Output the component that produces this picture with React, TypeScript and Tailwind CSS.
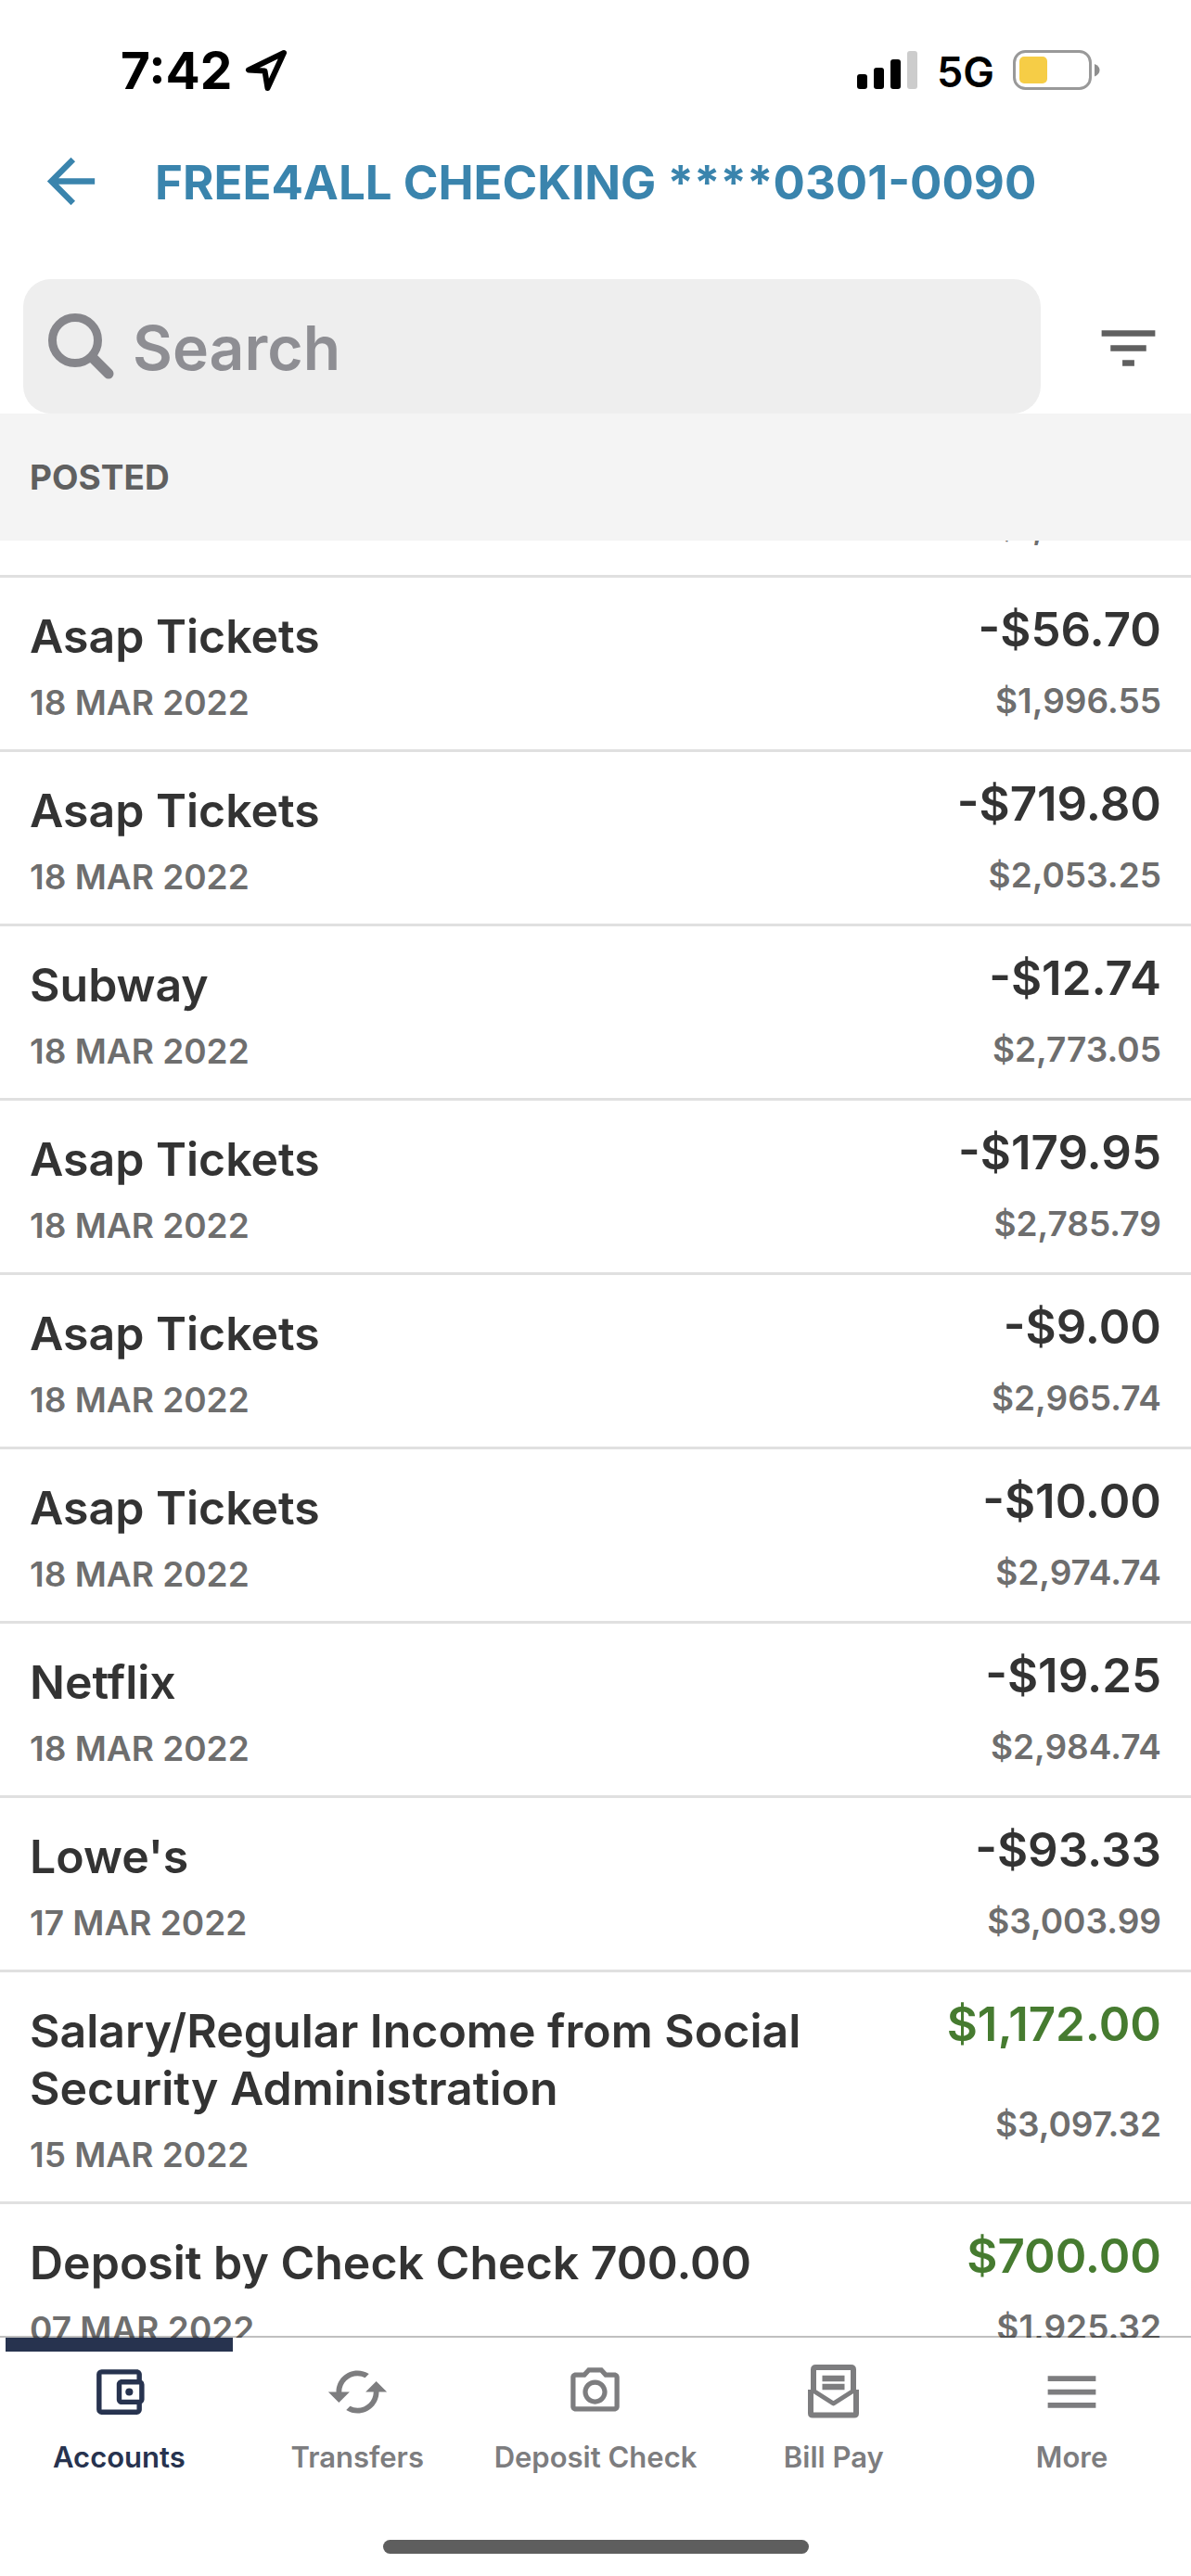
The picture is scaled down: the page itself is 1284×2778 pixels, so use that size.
import React from 'react';
import {
  MdArrowBack,
  MdCached,
  MdFilterList,
  MdMenu,
  MdOutlineAccountBalanceWallet,
  MdOutlinePhotoCamera,
} from 'react-icons/md';

interface Transaction {
  id: number;
  name: string;
  date: string;
  amount: string;
  balance: string;
}

const transactions: Transaction[] = [
  { id: 1, name: 'Asap Tickets', date: '20 MAR 2022', amount: '-$56.70', balance: '$1,939.85' },
  { id: 2, name: 'Asap Tickets', date: '18 MAR 2022', amount: '-$56.70', balance: '$1,996.55' },
  { id: 3, name: 'Asap Tickets', date: '18 MAR 2022', amount: '-$719.80', balance: '$2,053.25' },
  { id: 4, name: 'Subway', date: '18 MAR 2022', amount: '-$12.74', balance: '$2,773.05' },
  { id: 5, name: 'Asap Tickets', date: '18 MAR 2022', amount: '-$179.95', balance: '$2,785.79' },
  { id: 6, name: 'Asap Tickets', date: '18 MAR 2022', amount: '-$9.00', balance: '$2,965.74' },
  { id: 7, name: 'Asap Tickets', date: '18 MAR 2022', amount: '-$10.00', balance: '$2,974.74' },
  { id: 8, name: 'Netflix', date: '18 MAR 2022', amount: '-$19.25', balance: '$2,984.74' },
  { id: 9, name: "Lowe's", date: '17 MAR 2022', amount: '-$93.33', balance: '$3,003.99' },
  {
    id: 10,
    name: 'Salary/Regular Income from Social Security Administration',
    date: '15 MAR 2022',
    amount: '$1,172.00',
    balance: '$3,097.32',
  },
  { id: 11, name: 'Deposit by Check Check 700.00', date: '07 MAR 2022', amount: '$700.00', balance: '$1,925.32' },
];

const BillPayIcon = () => (
  <svg width="56" height="58" viewBox="0 0 56 58" fill="none" stroke="currentColor" strokeLinejoin="round">
    <path d="M6 29V5.500Q6 3 8.500 3H46.500Q49 3 49 5.500V29" strokeWidth="6" />
    <path d="M3 27V52.500Q3 54.500 5 54.500H50Q52 54.500 52 52.500V27" strokeWidth="6" />
    <path d="M4 27 27.500 42 51 27" strokeWidth="5" />
    <path d="M15.500 15H39.500M15.500 24H39.500" strokeWidth="6.500" />
  </svg>
);

const tabs = [
  { label: 'Accounts', icon: <MdOutlineAccountBalanceWallet size={65} />, active: true },
  { label: 'Transfers', icon: <MdCached size={69} /> },
  { label: 'Deposit Check', icon: <MdOutlinePhotoCamera size={63} /> },
  { label: 'Bill Pay', icon: <BillPayIcon /> },
  { label: 'More', icon: <MdMenu size={69} /> },
];

function StatusBar() {
  return (
    <div className="flex items-center justify-between pt-12 pr-[98px] pl-[130px] text-black">
      <div className="flex h-14 items-center gap-[14px]">
        <span className="text-[55px] leading-14 font-bold">7:42</span>
        <svg width="46" height="46" viewBox="0 0 46 46" fill="none">
          <path
            d="M42 4 4 22.500 21.500 23.500 24.500 42Z"
            stroke="currentColor"
            strokeWidth="6"
            strokeLinejoin="round"
          />
        </svg>
      </div>
      <div className="flex h-14 items-center gap-5">
        <svg width="66" height="42" viewBox="0 0 66 42" fill="currentColor">
          <rect x="0" y="25" width="11" height="16" rx="3" />
          <rect x="18" y="18" width="11" height="23" rx="3" />
          <rect x="36" y="9" width="11" height="32" rx="3" />
          <rect x="54" y="0" width="11" height="41" rx="3" fill="#cccccc" />
        </svg>
        <span className="pt-1 text-[45px] leading-14 font-semibold">5G</span>
        <svg width="94" height="44" viewBox="0 0 94 44">
          <rect x="1.500" y="1.500" width="82" height="40" rx="12" fill="none" stroke="#999999" strokeWidth="3" />
          <rect x="7" y="7" width="30" height="29" rx="5" fill="#f6cd46" />
          <path d="M88 15Q93.500 17 93.500 21.500T88 28.500Z" fill="#8e8e8e" />
        </svg>
      </div>
    </div>
  );
}

function TransactionRow({ item }: { item: Transaction }) {
  const isCredit = !item.amount.startsWith('-');
  return (
    <li className="flex justify-between border-b-[3px] border-[#e0e0e0] px-8 pt-8 pb-[25px]">
      <div className="max-w-[900px]">
        <h2 className="text-[50px] leading-[62px] font-semibold text-[#333333]">{item.name}</h2>
        <p className="mt-4 text-[37px] leading-[50px] font-semibold text-[#6e6e6e]">{item.date}</p>
      </div>
      <div className="flex flex-col text-right">
        <p
          className={`h-[50px] overflow-hidden text-[51px] leading-[48px] font-semibold ${isCredit ? 'text-[#467b30]' : 'text-[#333333]'}`}
        >
          {item.amount}
        </p>
        <div className="flex flex-1 items-center justify-end pt-[23px]">
          <p className="text-[37px] leading-[50px] font-semibold text-[#6e6e6e]">{item.balance}</p>
        </div>
      </div>
    </li>
  );
}

export default function App() {
  return (
    <div className="flex h-screen flex-col bg-white font-['Inter',sans-serif]">
      <StatusBar />

      <header className="flex items-center gap-[52px] px-[38px] pt-[46px] pb-[61px] text-[#3a84ad]">
        <button type="button" aria-label="Back">
          <MdArrowBack size={77} />
        </button>
        <h1 className="pt-1 text-[51px] leading-[86px] font-bold whitespace-nowrap">
          FREE4ALL CHECKING ****0301-0090
        </h1>
      </header>

      <div className="flex items-center pr-[29px] pl-[25px]">
        <label className="flex h-[145px] min-w-0 flex-1 items-center gap-5 rounded-[30px] bg-[#eeeeee] px-[27px]">
          <svg width="71" height="71" viewBox="0 0 71 71" fill="none" stroke="#86868b" className="shrink-0">
            <circle cx="29" cy="29" r="24.500" strokeWidth="9" />
            <path d="M48 48 65 65" strokeWidth="11" strokeLinecap="round" />
          </svg>
          <input
            type="search"
            aria-label="Search"
            placeholder="Search"
            className="h-[90px] min-w-0 flex-1 bg-transparent pt-1 text-[66px] font-semibold outline-none placeholder:text-[#8e8e93]"
          />
        </label>
        <button type="button" aria-label="Filter" className="ml-14 shrink-0 pt-1 text-[#606060]">
          <MdFilterList size={77} />
        </button>
      </div>

      <div className="bg-[#f4f4f4] px-8">
        <h2 className="text-[37px] leading-[137px] font-bold text-[#606060]">POSTED</h2>
      </div>

      <main className="min-h-0 flex-1 overflow-hidden">
        {/* list is scrolled, so the newest row is mostly tucked under the section header */}
        <ul className="-mt-[148px]">
          {transactions.map((item) => (
            <TransactionRow key={item.id} item={item} />
          ))}
        </ul>
      </main>

      <nav className="relative -mt-0.5 border-t-2 border-black/25">
        <div className="grid grid-cols-5">
          {tabs.map((tab) => (
            <a
              key={tab.label}
              href="#"
              className={`relative flex flex-col items-center pt-[23px] ${tab.active ? 'text-[#27334f]' : 'text-[#7d7d7f]'}`}
            >
              {tab.active && <span className="absolute top-0 right-1.5 left-1.5 h-[15px] bg-[#27334f]" />}
              <span className="flex h-[70px] items-center">{tab.icon}</span>
              <span className="mt-4 text-[31px] leading-10 font-semibold whitespace-nowrap">{tab.label}</span>
            </a>
          ))}
        </div>
        <div className="flex justify-center pt-[69px] pb-6">
          <div className="h-[15px] w-[459px] rounded-full bg-[#5e5e5e]" />
        </div>
      </nav>
    </div>
  );
}
